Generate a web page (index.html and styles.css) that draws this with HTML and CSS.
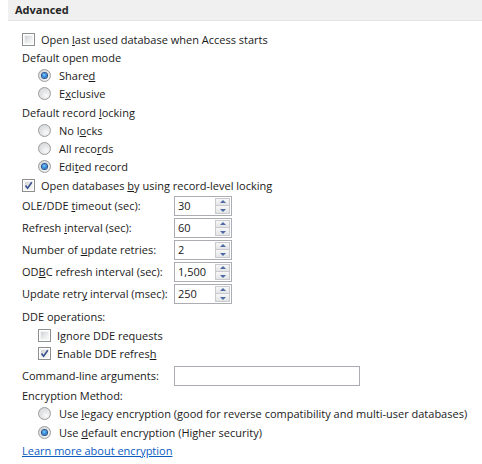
FILE: index.html
```html
<!DOCTYPE html>
<html>
<head>
<meta charset="utf-8">
<link rel="stylesheet" href="styles.css">
</head>
<body>
<div class="pane">
  <div class="header">Advanced</div>
  <div class="content">
    <div class="row"><span class="cb"></span><span>Open <u>l</u>ast used database when Access starts</span></div>
    <div class="row"><span>Default open mode</span></div>
    <div class="row indent"><span class="rb on"></span><span>Share<u>d</u></span></div>
    <div class="row indent"><span class="rb"></span><span>E<u>x</u>clusive</span></div>
    <div class="row"><span>Default record <u>l</u>ocking</span></div>
    <div class="row indent"><span class="rb"></span><span>No l<u>o</u>cks</span></div>
    <div class="row indent"><span class="rb"></span><span>All reco<u>r</u>ds</span></div>
    <div class="row indent"><span class="rb on"></span><span>Edi<u>t</u>ed record</span></div>
    <div class="row"><span class="cb on"><svg viewBox="0 0 9 9" width="9" height="9"><path d="M1.5 4.6 L3.6 7.2 L7.8 1.2" fill="none" stroke="#3b4f8a" stroke-width="1.6"/></svg></span><span>Open databases <u>b</u>y using record-level locking</span></div>

    <div class="spins">
      <div class="spinrow"><span class="lbl">OLE/DDE <u>t</u>imeout (sec):</span><span class="spin"><span class="val">30</span><span class="btns"><span class="up"></span><span class="dn"></span></span></span></div>
      <div class="spinrow"><span class="lbl">Refresh <u>i</u>nterval (sec):</span><span class="spin"><span class="val">60</span><span class="btns"><span class="up"></span><span class="dn"></span></span></span></div>
      <div class="spinrow"><span class="lbl">Number of <u>u</u>pdate retries:</span><span class="spin"><span class="val">2</span><span class="btns"><span class="up"></span><span class="dn"></span></span></span></div>
      <div class="spinrow"><span class="lbl">OD<u>B</u>C refresh interval (sec):</span><span class="spin"><span class="val">1,500</span><span class="btns"><span class="up"></span><span class="dn"></span></span></span></div>
      <div class="spinrow"><span class="lbl">Update retr<u>y</u> interval (msec):</span><span class="spin"><span class="val">250</span><span class="btns"><span class="up"></span><span class="dn"></span></span></span></div>
    </div>

    <div class="row gap3"><span>DDE operations:</span></div>
    <div class="row indent"><span class="cb"></span><span>I<u>g</u>nore DDE requests</span></div>
    <div class="row indent"><span class="cb on"><svg viewBox="0 0 9 9" width="9" height="9"><path d="M1.5 4.6 L3.6 7.2 L7.8 1.2" fill="none" stroke="#3b4f8a" stroke-width="1.6"/></svg></span><span>Enable DDE refres<u>h</u></span></div>
    <div class="spinrow cmd"><span class="lbl">Command-line arguments:</span><span class="textbox"></span></div>
    <div class="row enc"><span>Encryption Method:</span></div>
    <div class="row indent"><span class="rb"></span><span>Use <u>l</u>egacy encryption (good for reverse compatibility and multi-user databases)</span></div>
    <div class="row indent"><span class="rb on"></span><span>Use <u>d</u>efault encryption (Higher security)</span></div>
    <div class="row"><a class="link" href="#">Learn more about encryption</a></div>
  </div>
</div>
</body>
</html>
```

FILE: styles.css
```css
html, body {
  margin: 0;
  padding: 0;
  background: #ffffff;
}
body {
  font-family: "Open Sans", "Noto Sans", "Liberation Sans", sans-serif;
  font-size: 11px;
  color: #1a1a1a;
}
.pane {
  margin-left: 8px;
  width: 474px;
}
.header {
  height: 21px;
  line-height: 20px;
  background: #f0f0f0;
  border-bottom: 1px solid #e3e3e3;
  padding-left: 7px;
  font-weight: bold;
  color: #262626;
  box-sizing: border-box;
}
.content {
  padding: 9px 0 0 14px;
}
.row {
  height: 18.25px;
  display: flex;
  align-items: center;
  gap: 6px;
  white-space: nowrap;
}
.row.indent {
  padding-left: 16px;
}
.row.indent .rb + span {
  margin-left: 2px;
}
.row.gap3 {
  margin-top: 4px;
}
.row.enc {
  margin-top: 1px;
}
u {
  text-decoration: underline;
  text-underline-offset: 1px;
}
.cb {
  width: 13px;
  height: 13px;
  box-sizing: border-box;
  border: 1px solid #8e8f8f;
  background: #fff;
  position: relative;
  flex: none;
  display: flex;
  align-items: center;
  justify-content: center;
}
.cb::before {
  content: "";
  position: absolute;
  left: 1px;
  top: 1px;
  right: 1px;
  bottom: 1px;
  background: linear-gradient(135deg, #cfd1d4 0%, #e6e7e8 50%, #f7f7f7 100%);
  border: 1px solid #f4f4f4;
  box-sizing: border-box;
}
.cb svg {
  position: relative;
}
.rb {
  width: 13px;
  height: 13px;
  box-sizing: border-box;
  border-radius: 50%;
  border: 1px solid #9a9c9e;
  background: radial-gradient(circle at 65% 70%, #fafafa 0%, #e4e5e6 45%, #cfd1d3 100%);
  flex: none;
  display: flex;
  align-items: center;
  justify-content: center;
}
.rb.on::after {
  content: "";
  width: 5px;
  height: 5px;
  border-radius: 50%;
  background: radial-gradient(circle at 45% 40%, #8fd3ff 0%, #2d8de0 45%, #1b4d8e 100%);
  box-shadow: 0 0 0 1px #27518a;
}
.spins {
  display: flex;
  flex-direction: column;
  gap: 2px;
  margin-top: 1.5px;
}
.spinrow {
  height: 20px;
  display: flex;
  align-items: center;
  white-space: nowrap;
}
.lbl {
  width: 152px;
  flex: none;
}
.spin {
  width: 58px;
  height: 20px;
  box-sizing: border-box;
  border: 1px solid #abadb3;
  display: flex;
  align-items: center;
  padding: 1px;
}
.val {
  flex: 1;
  padding-left: 2px;
}
.btns {
  width: 15px;
  height: 16px;
  display: flex;
  flex-direction: column;
}
.up, .dn {
  flex: 1;
  box-sizing: border-box;
  border: 1px solid #c8cacd;
  background: linear-gradient(#f7f7f7, #e3e4e6);
  position: relative;
}
.dn {
  border-top: none;
}
.up::after, .dn::after {
  content: "";
  position: absolute;
  left: 50%;
  top: 50%;
  width: 0;
  height: 0;
  margin-left: -3px;
  border-left: 3px solid transparent;
  border-right: 3px solid transparent;
}
.up::after {
  margin-top: -2px;
  border-bottom: 3px solid #4f6aa5;
}
.dn::after {
  margin-top: -1px;
  border-top: 3px solid #4f6aa5;
}
.cmd {
  margin-top: 3px;
}
.textbox {
  width: 186px;
  height: 20px;
  box-sizing: border-box;
  border: 1px solid #abadb3;
  background: #fff;
}
.link {
  color: #0a5cc2;
  text-decoration: underline;
}
```
